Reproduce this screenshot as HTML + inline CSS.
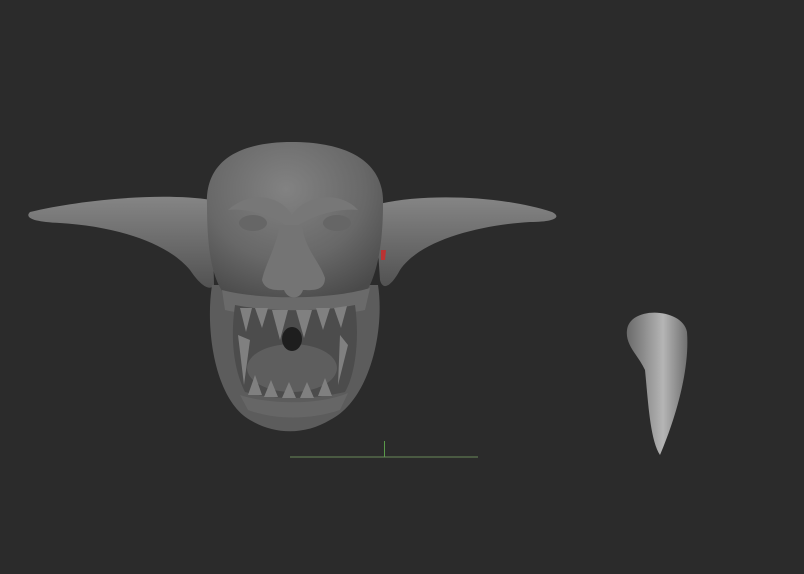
<!DOCTYPE html>
<html><head><style>
html,body{margin:0;padding:0;background:#2b2b2b;width:804px;height:574px;overflow:hidden}
</style></head><body>
<svg width="804" height="574" viewBox="0 0 804 574" xmlns="http://www.w3.org/2000/svg">
<defs>
<radialGradient id="sk" cx="0.45" cy="0.3" r="0.75">
<stop offset="0" stop-color="#828282"/><stop offset="0.6" stop-color="#686868"/><stop offset="1" stop-color="#4a4a4a"/>
</radialGradient>
<linearGradient id="ear" x1="0" y1="0" x2="0" y2="1">
<stop offset="0" stop-color="#858585"/><stop offset="1" stop-color="#525252"/>
</linearGradient>
<linearGradient id="horn" x1="0" y1="0" x2="1" y2="0">
<stop offset="0" stop-color="#6a6a6a"/><stop offset="0.6" stop-color="#b5b5b5"/><stop offset="1" stop-color="#707070"/>
</linearGradient>
</defs>
<path d="M212,200 C160,192 80,200 30,212 C24,218 34,222 60,223 C110,226 165,240 190,270 C200,285 210,292 214,285 Z" fill="url(#ear)"/>
<path d="M375,205 C420,193 500,195 552,212 C562,217 555,222 530,222 C480,225 420,240 400,270 C392,285 383,292 380,280 Z" fill="url(#ear)"/>
<path d="M212,285 C205,330 215,400 250,420 C275,435 305,435 330,420 C370,400 385,330 378,285 Z" fill="#5c5c5c"/>
<path d="M207,205 C205,160 240,142 292,142 C345,142 385,160 383,205 C383,250 375,285 360,300 L230,300 C212,285 207,250 207,205 Z" fill="url(#sk)"/>
<path d="M228,210 C250,190 280,195 292,215 C305,195 340,190 358,210 C340,208 310,215 292,230 C275,215 245,208 228,210 Z" fill="#777"/>
<ellipse cx="253" cy="223" rx="14" ry="8" fill="#666"/>
<ellipse cx="337" cy="223" rx="14" ry="8" fill="#666"/>
<path d="M280,225 C275,250 265,265 262,280 C265,292 280,290 284,290 C288,300 300,300 303,290 C310,290 325,292 325,278 C320,262 305,250 302,225 Z" fill="#747474"/>
<path d="M222,290 C260,300 330,300 370,288 L365,310 C330,318 260,318 225,310 Z" fill="#6a6a6a"/>
<path d="M235,305 C270,312 320,312 355,305 C360,340 355,375 345,392 C310,400 275,400 245,392 C234,370 230,340 235,305 Z" fill="#4c4c4c"/>
<ellipse cx="292" cy="368" rx="45" ry="24" fill="#5e5e5e"/>
<ellipse cx="292" cy="339" rx="10" ry="12" fill="#1e1e1e"/>
<g fill="#808080">
<path d="M240,308 L246,332 L252,308Z"/><path d="M255,308 L262,328 L268,308Z"/>
<path d="M272,310 L280,340 L288,310Z"/><path d="M296,310 L304,338 L312,310Z"/>
<path d="M316,308 L323,330 L330,308Z"/><path d="M334,308 L341,328 L347,306Z"/>
<path d="M238,335 L244,385 L250,340Z"/><path d="M340,335 L338,385 L348,345Z"/>
</g>
<g fill="#808080">
<path d="M248,395 L255,375 L262,395Z"/><path d="M264,397 L271,380 L278,397Z"/>
<path d="M282,398 L289,382 L296,398Z"/><path d="M300,398 L307,382 L314,398Z"/>
<path d="M318,396 L325,378 L332,396Z"/>
</g>
<path d="M240,395 C270,405 320,405 348,393 L340,410 C310,420 275,420 248,410 Z" fill="#666"/>
<path d="M381,250 l5,0 l-1,10 l-4,0z" fill="#b33"/>
<path d="M627,330 C630,305 683,308 687,332 C690,370 675,420 660,455 C650,440 648,400 645,370 C638,355 625,345 627,330 Z" fill="url(#horn)"/>
<line x1="290" y1="457" x2="478" y2="457" stroke="#6a8a5a" stroke-width="1"/>
<line x1="384.5" y1="441" x2="384.5" y2="457" stroke="#5a9a4a" stroke-width="1"/>
</svg>
</body></html>
